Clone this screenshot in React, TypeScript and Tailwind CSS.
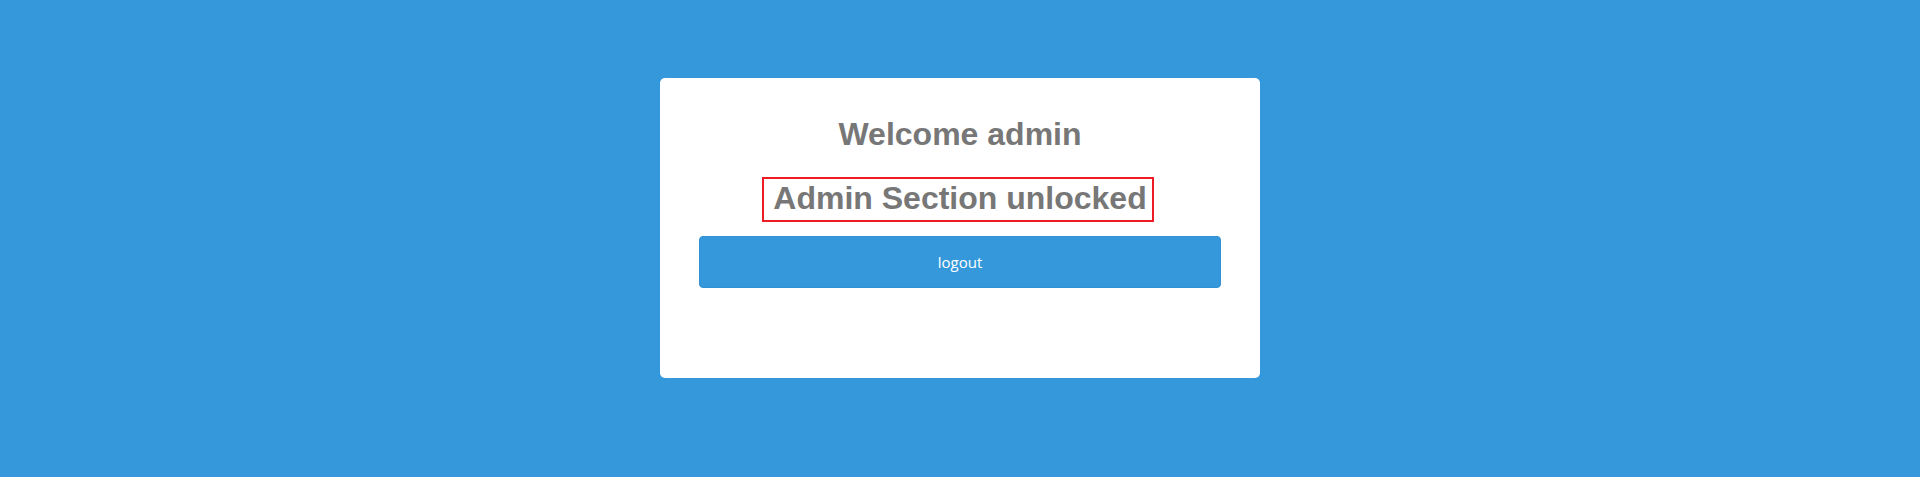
import React from "react";

export default function App() {
  return (
    <div className="min-h-screen w-full bg-[#3598db] pt-[78px]" style={{ minHeight: 477 }}>
      <div className="mx-auto flex h-[300px] w-[600px] flex-col items-center rounded-[5px] bg-white px-[39px] pt-[38px]">
        <h1 className="font-['Liberation_Sans',Arial,sans-serif] text-[32px] font-bold leading-[37px] text-[#777777]">
          Welcome admin
        </h1>
        <h1 className="mt-[24px] mr-[4px] border-2 border-[#ed1c24] pl-[9px] pr-[5px] pt-[1px] pb-[3px] font-['Liberation_Sans',Arial,sans-serif] text-[32px] font-bold leading-[37px] text-[#777777]">
          Admin Section unlocked
        </h1>
        <button
          type="button"
          className="mt-[14px] flex h-[52px] w-[522px] items-center justify-center rounded-[4px] border border-[#3191d4] bg-[#3598db] font-['Open_Sans','Noto_Sans',sans-serif] text-[15px] text-white"
        >
          logout
        </button>
      </div>
    </div>
  );
}
